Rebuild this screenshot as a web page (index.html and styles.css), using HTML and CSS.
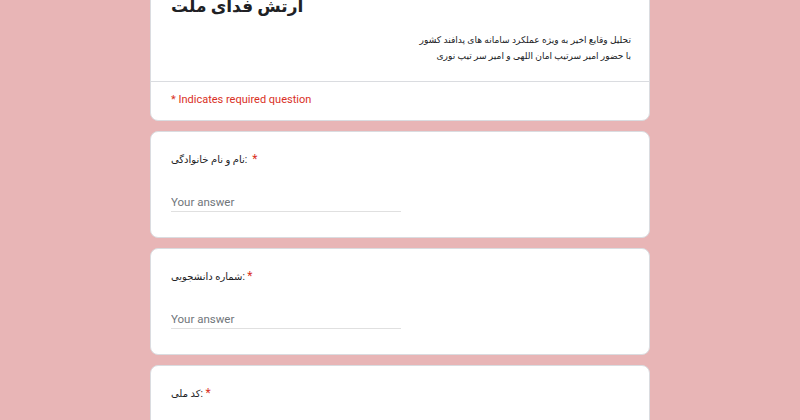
FILE: index.html
```html
<!DOCTYPE html>
<html lang="fa">
<head>
    <meta charset="UTF-8">
    <meta name="viewport" content="width=device-width, initial-scale=1.0">
    <title>ارتش فدای ملت</title>
    <link rel="stylesheet" href="styles.css">
</head>
<body>
    <div class="form">
        <div class="card header-card">
            <div class="header-top">
                <h1 class="form-title">ارتش فدای ملت</h1>
                <div class="form-desc">
                    <p>تحلیل وقایع اخیر به ویژه عملکرد سامانه های پدافند کشور</p>
                    <p>با حضور امیر سرتیپ امان اللهی و امیر سر تیپ نوری</p>
                </div>
            </div>
            <div class="required-note">* Indicates required question</div>
        </div>

        <div class="card question">
            <div class="q-label">نام و نام خانوادگی:&nbsp; <span class="req">*</span></div>
            <input class="answer" type="text" placeholder="Your answer">
        </div>

        <div class="card question">
            <div class="q-label">شماره دانشجویی: <span class="req">*</span></div>
            <input class="answer" type="text" placeholder="Your answer">
        </div>

        <div class="card question">
            <div class="q-label">کد ملی: <span class="req">*</span></div>
            <input class="answer" type="text" placeholder="Your answer">
        </div>
    </div>
</body>
</html>
```

FILE: styles.css
```css
body {
    margin: 0;
    background-color: #e8b5b6;
    font-family: Roboto, "DejaVu Sans", sans-serif;
    color: #202124;
}

/* page is shown scrolled a little, title half out of view */
.form {
    width: 500px;
    margin: -40px auto 0;
}

.card {
    background-color: #fff;
    border: 1px solid #dadce0;
    border-radius: 8px;
    margin-bottom: 10px;
}

.header-top {
    padding: 29px 18px 17px 20px;
    border-bottom: 1px solid #dadce0;
}

.form-title {
    margin: 0;
    font-size: 17px;
    line-height: 32px;
    font-weight: bold;
    color: #202124;
}

.form-desc {
    margin-top: 10px;
    text-align: right;
    direction: rtl;
    font-size: 9.1px;
    line-height: 16px;
    color: #202124;
}

.form-desc p {
    margin: 0;
}

.required-note {
    padding: 10px 20px 12px;
    font-size: 11px;
    line-height: 16px;
    color: #d93025;
}

.question {
    padding: 18px 20px 25px;
}

.q-label {
    font-size: 10px;
    line-height: 18px;
    color: #202124;
}

.req {
    color: #d93025;
    font-size: 12px;
}

.answer {
    display: block;
    width: 230px;
    margin-top: 23px;
    padding: 0;
    height: 19px;
    border: none;
    border-bottom: 1px solid #e0e0e0;
    font-family: Roboto, sans-serif;
    font-size: 11.5px;
    color: #202124;
    outline: none;
}

.answer::placeholder {
    color: #70757a;
}
```
